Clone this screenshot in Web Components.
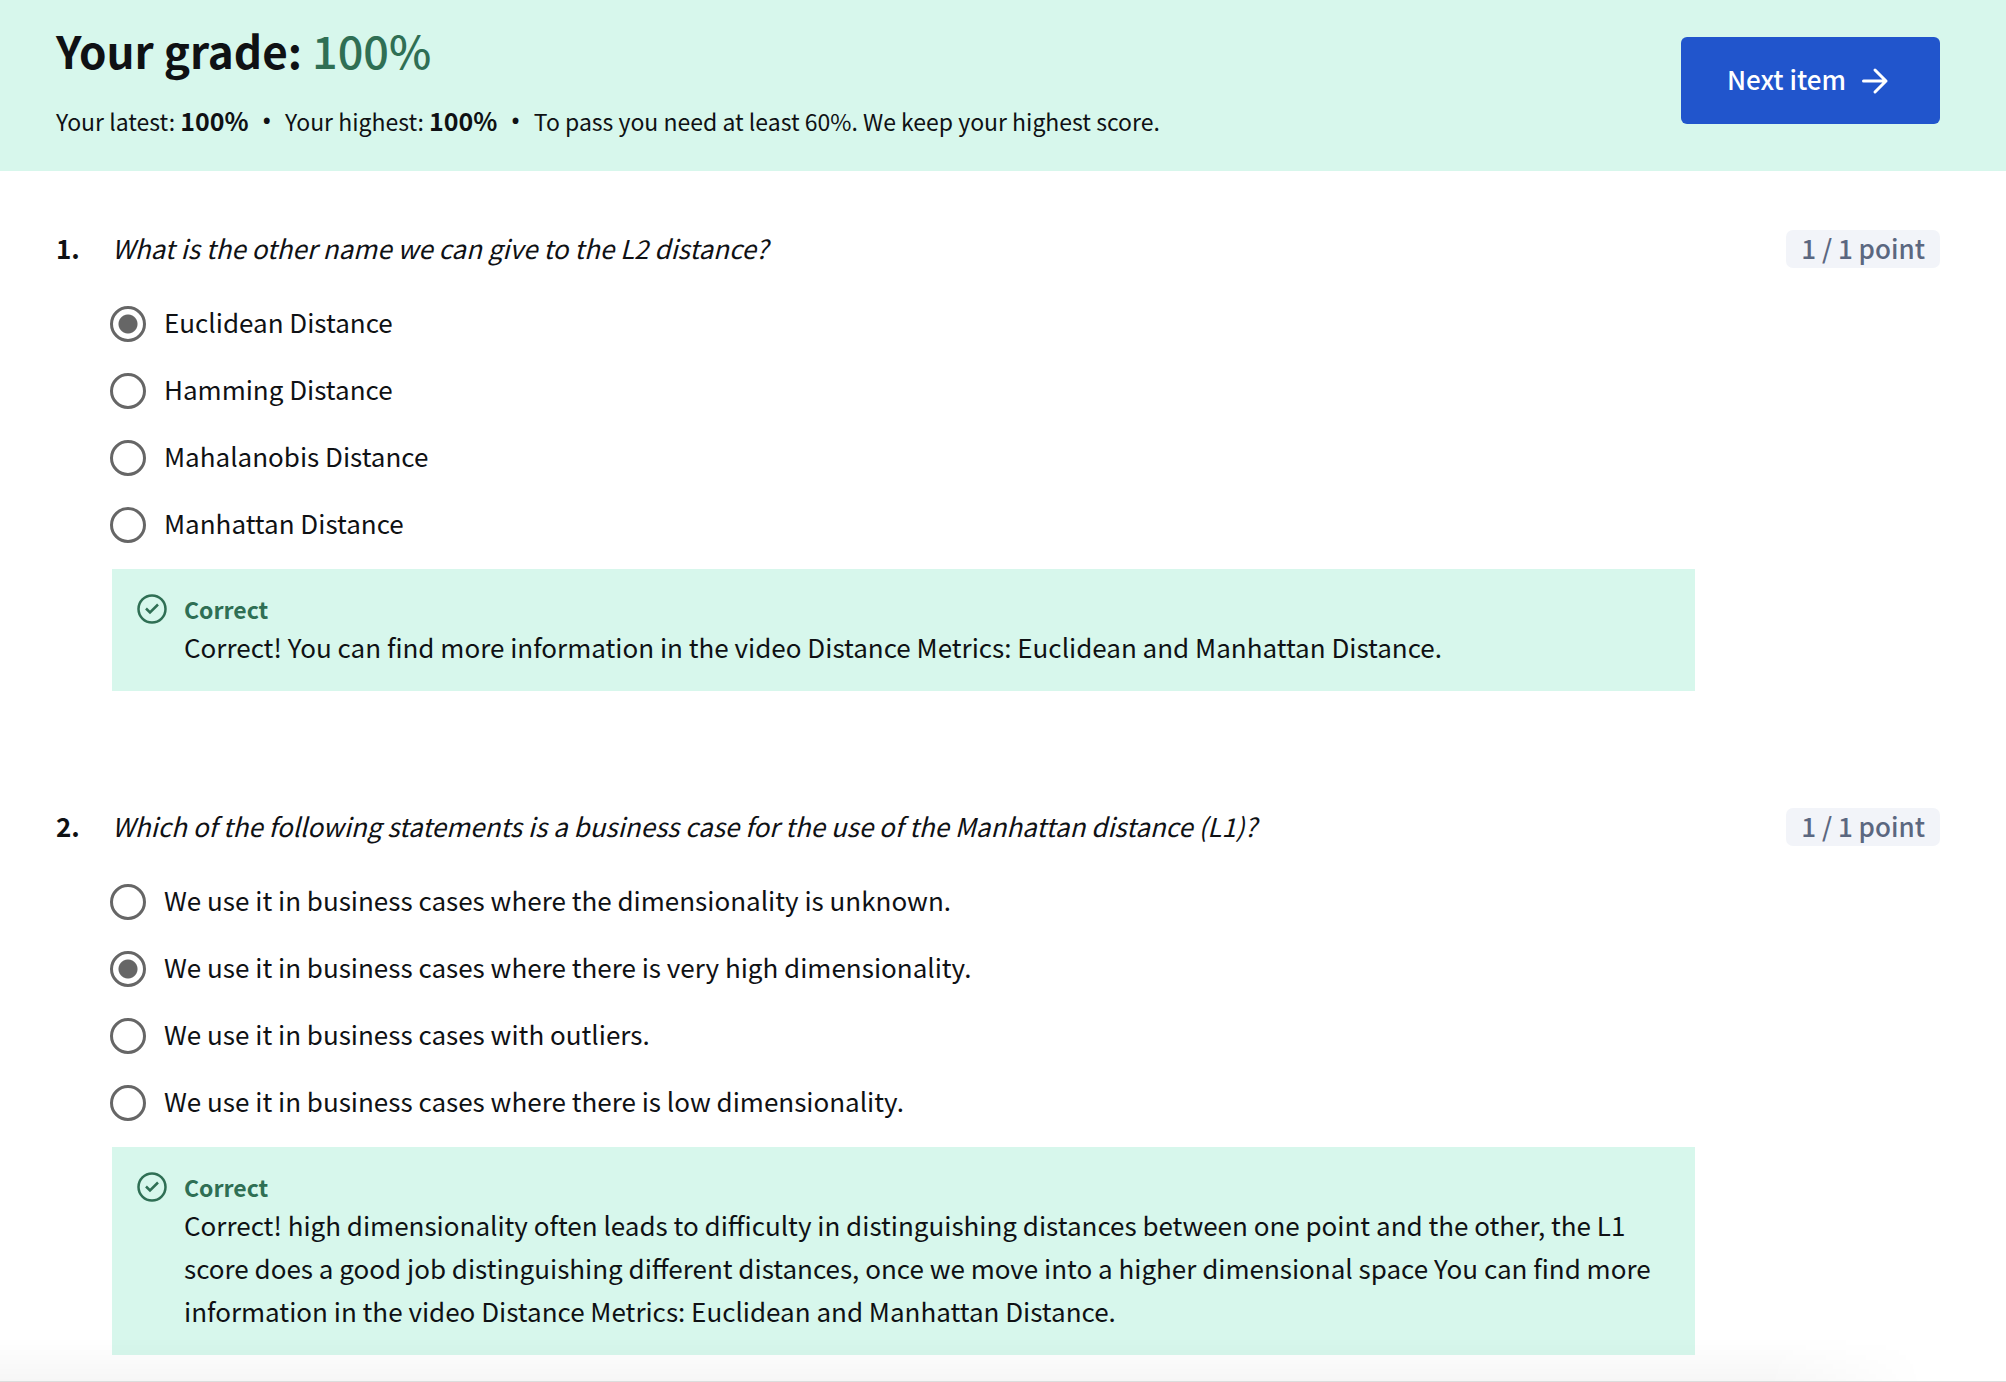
<!DOCTYPE html>
<html lang="en">
<head>
<meta charset="utf-8">
<meta name="viewport" content="width=device-width, initial-scale=1">
<title>Quiz results</title>
<style>
body{margin:0;background:#fff;color:#0f1114;font-family:"Source Sans Pro","Noto Sans CJK SC","Noto Sans",sans-serif}
</style>
</head>
<body>
<quiz-page>
  <grade-banner slot="banner" grade="100%" latest="100%" highest="100%"></grade-banner>
  <quiz-question number="1" points="1 / 1 point" prompt="What is the other name we can give to the L2 distance?">
    <quiz-option group="q1" label="Euclidean Distance" checked></quiz-option>
    <quiz-option group="q1" label="Hamming Distance"></quiz-option>
    <quiz-option group="q1" label="Mahalanobis Distance"></quiz-option>
    <quiz-option group="q1" label="Manhattan Distance"></quiz-option>
    <answer-feedback slot="feedback">Correct! You can find more information in the video Distance Metrics: Euclidean and Manhattan Distance.</answer-feedback>
  </quiz-question>
  <quiz-question number="2" points="1 / 1 point" prompt="Which of the following statements is a business case for the use of the Manhattan distance (L1)?">
    <quiz-option group="q2" label="We use it in business cases where the dimensionality is unknown."></quiz-option>
    <quiz-option group="q2" label="We use it in business cases where there is very high dimensionality." checked></quiz-option>
    <quiz-option group="q2" label="We use it in business cases with outliers."></quiz-option>
    <quiz-option group="q2" label="We use it in business cases where there is low dimensionality."></quiz-option>
    <answer-feedback slot="feedback">Correct! high dimensionality often leads to difficulty in distinguishing distances between one point and the other, the L1 score does a good job distinguishing different distances, once we move into a higher dimensional space You can find more information in the video Distance Metrics: Euclidean and Manhattan Distance.</answer-feedback>
  </quiz-question>
  <dock-edge slot="dock"></dock-edge>
</quiz-page>
<script>
const define = (name, render) => customElements.define(name, class extends HTMLElement {
  connectedCallback() {
    if (this.shadowRoot) return;
    this.attachShadow({ mode: "open" }).innerHTML =
      "<style>*{box-sizing:border-box}</style>" + render(this);
  }
});

define("quiz-page", () => `
<style>
:host{display:block}
main{display:flex;flex-direction:column;gap:117px;padding:59px 66px 24px 56px}
</style>
<slot name="banner"></slot>
<main><slot></slot></main>
<slot name="dock"></slot>`);

define("grade-banner", el => `
<style>
:host{display:block;background:#d7f7ec}
header{display:flex;justify-content:space-between;align-items:flex-start;gap:32px;padding:17px 66px 24px 56px}
h1{margin:0;font-size:44px;line-height:66px;font-weight:700}
h1 span{color:#2f6f54;font-size:45px;font-weight:500}
p{margin:11px 0 0;display:flex;flex-wrap:wrap;align-items:baseline;gap:0 13px;font-size:23px;line-height:52px}
b{font-size:25px;font-weight:700}
i{font:normal 28px/28px "Open Sans",sans-serif}
button{flex:none;margin:20px 0 0;min-width:259px;height:87px;padding:0 43px;border:0;border-radius:6px;background:#2155cc;color:#fff;font-family:inherit;font-weight:500;font-size:26px;display:flex;align-items:center;justify-content:center;gap:12px}
button span{padding-bottom:4px}
svg{display:block;flex:none}
</style>
<header>
  <div>
    <h1>Your grade: <span>${el.getAttribute("grade")}</span></h1>
    <p><span>Your latest: <b>${el.getAttribute("latest")}</b></span><i>•</i><span>Your highest: <b>${el.getAttribute("highest")}</b></span><i>•</i><span>To pass you need at least 60%. We keep your highest score.</span></p>
  </div>
  <button type="button"><span>Next item</span><svg width="36" height="36" viewBox="0 0 36 36" fill="none" stroke="#fff" stroke-width="3" stroke-linecap="round" stroke-linejoin="round"><path d="M5.5 18H28M17 7L28 18L17 29"/></svg></button>
</header>`);

define("quiz-question", el => `
<style>
:host{display:block}
section{display:grid;grid-template-columns:56px minmax(0,1fr) 245px}
b,h2{font-size:26px;line-height:36px}
b{font-weight:700}
h2{margin:0;font-weight:400;font-style:italic}
.points{justify-self:end;font-size:26px;font-weight:500;line-height:36px;height:38px;padding:0 15px;border-radius:7px;background:#f2f4f9;color:#5b6780}
fieldset{grid-column:2;min-width:0;margin:22px 0 0;padding:0;border:0}
.feedback{grid-column:2;margin-top:11px}
</style>
<section>
  <b>${el.getAttribute("number")}.</b>
  <h2>${el.getAttribute("prompt")}</h2>
  <span class="points">${el.getAttribute("points")}</span>
  <fieldset aria-label="Answers"><slot></slot></fieldset>
  <div class="feedback"><slot name="feedback"></slot></div>
</section>`);

define("quiz-option", el => `
<style>
:host{display:block}
label{display:flex;align-items:center;gap:18px;height:67px;font-size:26px}
input{appearance:none;flex:none;margin:0 0 0 -2px;width:36px;height:36px;border:3px solid #666;border-radius:50%;background:#fff}
input:checked{background:radial-gradient(circle,#666 9px,#fff 10px)}
span{padding-bottom:4px}
</style>
<label><input type="radio" name="${el.getAttribute("group")}"${el.hasAttribute("checked") ? " checked" : ""}><span>${el.getAttribute("label")}</span></label>`);

define("answer-feedback", () => `
<style>
:host{display:block}
aside{display:flex;gap:17px;padding:25px 25px 23px;background:#d7f7ec}
svg{flex:none}
strong{display:block;font-size:23px;line-height:31px;color:#2f6f54}
p{margin:0;font-size:26px;line-height:43px}
</style>
<aside><svg width="30" height="30" viewBox="0 0 30 30" fill="none" stroke="#2f6f54" stroke-width="2.5"><circle cx="15" cy="15" r="13.5"/><path d="M9 14.5L13 18.5L21 10.5"/></svg><div><strong>Correct</strong><p><slot></slot></p></div></aside>`);

define("dock-edge", () => `
<style>
:host{position:fixed;left:0;right:0;bottom:0;height:44px;pointer-events:none;border-bottom:1px solid #dcdddd;box-sizing:border-box}
div{height:100%;background:linear-gradient(to bottom,rgba(0,0,0,0),rgba(0,0,0,.035));mask-image:linear-gradient(to right,#000 calc(100% - 240px),transparent calc(100% - 80px))}
</style>
<div></div>`);
</script>
</body>
</html>
